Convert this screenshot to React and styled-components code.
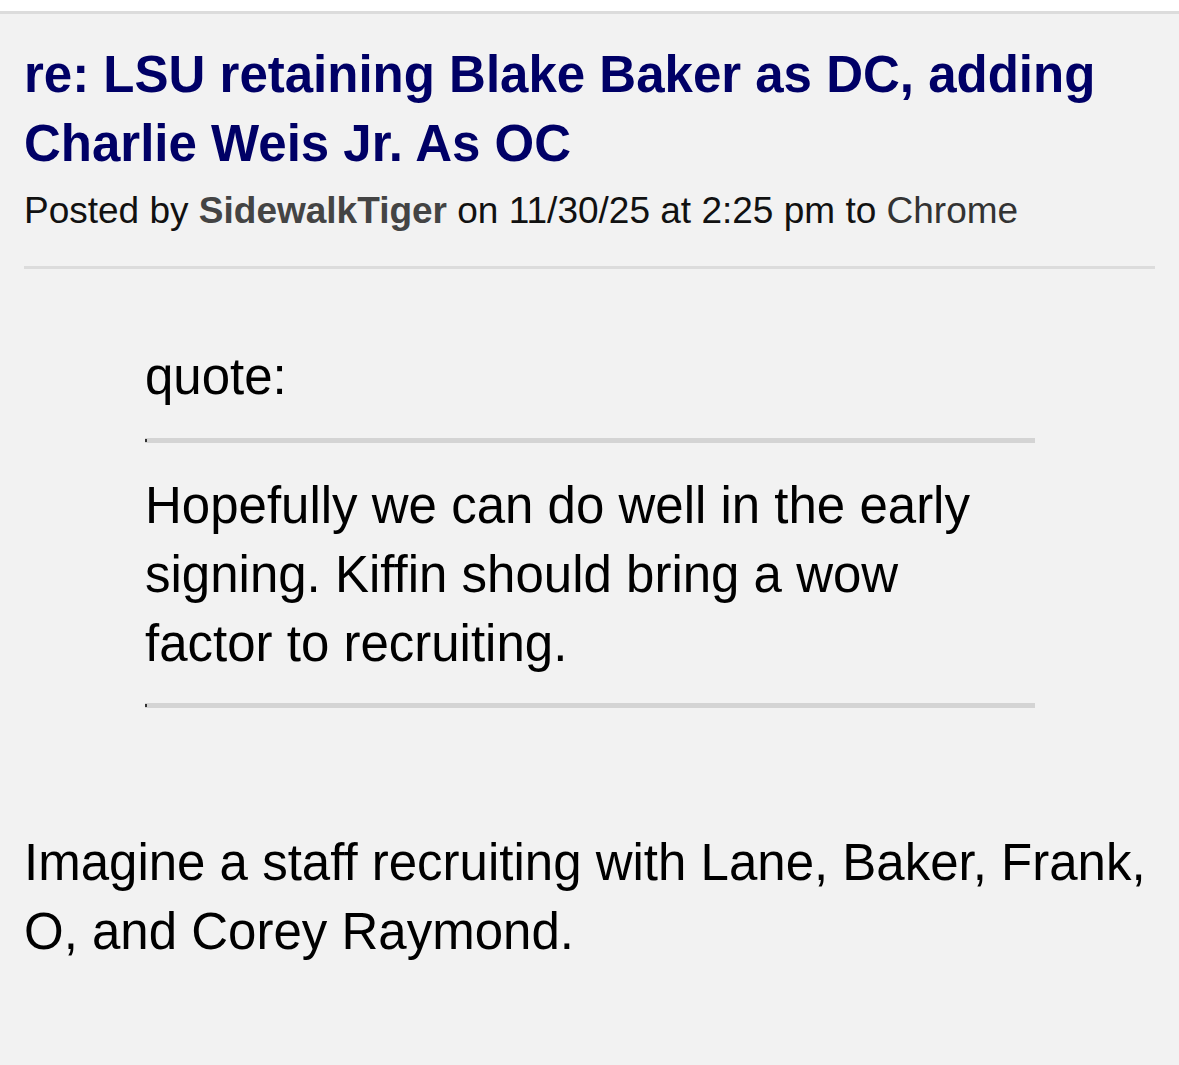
import React from "react";
import styled, { createGlobalStyle } from "styled-components";

const Global = createGlobalStyle`
  html, body { margin: 0; padding: 0; background: #ffffff; }
  body { font-family: "Liberation Sans", Arial, Helvetica, sans-serif; }
`;

const Page = styled.div`
  padding-top: 11px;
  min-height: 1065px;
  box-sizing: border-box;
  display: flex;
  flex-direction: column;
`;

const Post = styled.article`
  flex: 1;
  background: #f2f2f2;
  border-top: 3px solid #dcdcdc;
  padding: 26px 24px 0 24px;
  color: #000;
`;

const Title = styled.h1`
  margin: 0;
  font-family: "Liberation Sans", Arial, sans-serif;
  font-weight: 700;
  font-size: 51px;
  line-height: 69px;
  color: #000066;
`;

const Meta = styled.div`
  margin-top: 12px;
  font-size: 37px;
  line-height: 41px;
  color: #111;
`;

const Author = styled.b`
  color: #444;
  font-weight: 700;
`;

const Device = styled.span`
  color: #333;
`;

const Divider = styled.div`
  margin-top: 35px;
  height: 3px;
  background: #dcdcdc;
`;

const Quote = styled.blockquote`
  margin: 73px 120px 0 121px;
  font-size: 51px;
  line-height: 69px;
`;

const QuoteLabel = styled.div``;

const QuoteRule = styled.div`
  position: relative;
  margin: ${(p) => p.$mt}px 0 0;
  height: 5px;
  background: #d4d4d4;
  &::before {
    content: "";
    position: absolute;
    left: 0;
    top: 1px;
    width: 2px;
    height: 3px;
    background: #333;
  }
`;

const QuoteText = styled.div`
  margin-top: 28px;
`;

const Body = styled.div`
  margin-top: 120px;
  font-size: 51px;
  line-height: 69px;
  color: #000;
`;

export default function App() {
  return (
    <>
      <Global />
      <Page>
        <Post>
          <Title>re: LSU retaining Blake Baker as DC, adding Charlie Weis Jr. As OC</Title>
          <Meta>
            Posted by <Author>SidewalkTiger</Author> on 11/30/25 at 2:25 pm to <Device>Chrome</Device>
          </Meta>
          <Divider />
          <Quote>
            <QuoteLabel>quote:</QuoteLabel>
            <QuoteRule $mt={27} />
            <QuoteText>
              Hopefully we can do well in the early signing. Kiffin should bring a wow factor to recruiting.
            </QuoteText>
            <QuoteRule $mt={25} />
          </Quote>
          <Body>
            Imagine a staff recruiting with Lane, Baker, Frank, O, and Corey Raymond.
          </Body>
        </Post>
      </Page>
    </>
  );
}
